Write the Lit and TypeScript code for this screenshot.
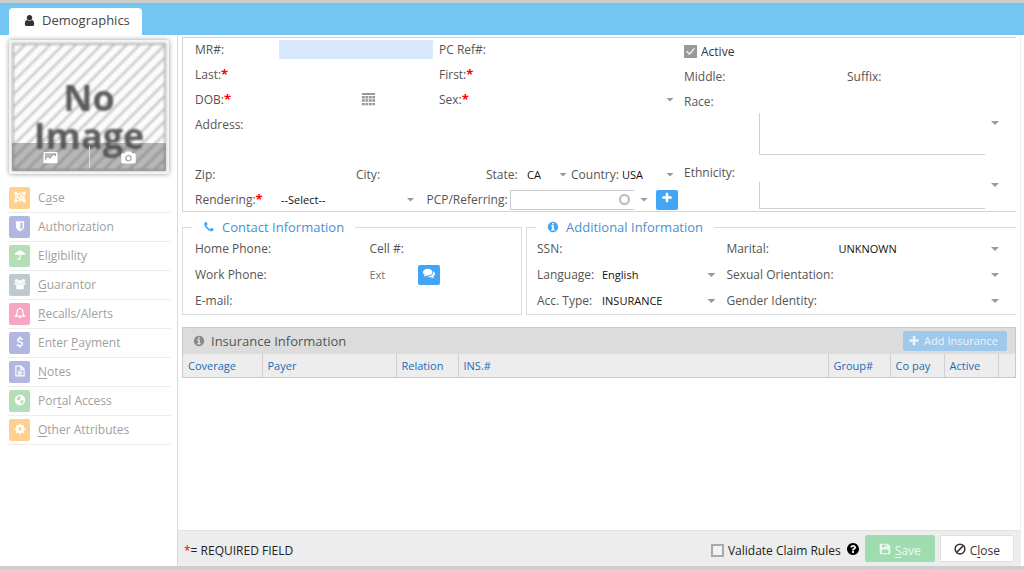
import { LitElement, html, css, svg, nothing } from "lit";
import { customElement, property } from "lit/decorators.js";

const CIRCLE = "m640 416q0 209-103 385.5t-279.5 279.5-385.5 103-385.5-103-279.5-279.5-103-385.5 103-385.5 279.5-279.5 385.5-103 385.5 103 279.5 279.5 103 385.5z";

const FILLED: Record<string, string> = {
  user: "M1536 1399q0 109-62.5 187t-150.5 78h-854q-88 0-150.5-78t-62.5-187q0-85 8.5-160.5t31.5-152 58.5-131 94-89 134.5-34.5q131 128 313 128t313-128q76 0 134.5 34.5t94 89 58.5 131 31.5 152 8.5 160.5zm-256-887q0 159-112.5 271.5t-271.5 112.5-271.5-112.5-112.5-271.5 112.5-271.5 271.5-112.5 271.5 112.5 112.5 271.5z",
  plus: "M1600 736v192q0 40-28 68t-68 28h-416v416q0 40-28 68t-68 28h-192q-40 0-68-28t-28-68v-416h-416q-40 0-68-28t-28-68v-192q0-40 28-68t68-28h416v-416q0-40 28-68t68-28h192q40 0 68 28t28 68v416h416q40 0 68 28t28 68z",
  phone: "M1600 1240q0 27-10 70.5t-21 68.5q-21 50-122 106-94 51-186 51-27 0-52.5-3.5t-57.5-12.5-47.5-14.5-55.5-20.5-49-18q-98-35-175-83-128-79-264.5-215.5t-215.5-264.5q-48-77-83-175-3-9-18-49t-20.5-55.5-14.5-47.5-12.5-57.5-3.5-52.5q0-92 51-186 56-101 106-122 25-11 68.5-21t70.5-10q14 0 21 3 18 6 53 76 11 19 30 54t35 63.5 31 53.5q3 4 17.5 25t21.5 35.5 7 28.5q0 20-28.5 50t-62 55-62 53-28.5 46q0 9 5 22.5t8.5 20.5 14 24 11.5 19q76 137 174 235t235 174q2 1 19 11.5t24 14 20.5 8.5 22.5 5q18 0 46-28.5t53-62 55-62 50-28.5q14 0 28.5 7t35.5 21.5 25 17.5q25 15 53.5 31t63.5 35 54 30q70 35 76 53 3 7 3 21z",
  info: "M1152 1376v-160q0-14-9-23t-23-9h-96v-512q0-14-9-23t-23-9h-320q-14 0-23 9t-9 23v160q0 14 9 23t23 9h96v320h-96q-14 0-23 9t-9 23v160q0 14 9 23t23 9h448q14 0 23-9t9-23zm-128-896v-160q0-14-9-23t-23-9h-192q-14 0-23 9t-9 23v160q0 14 9 23t23 9h192q14 0 23-9t9-23z" + CIRCLE,
  question: "M1024 1376v-192q0-14-9-23t-23-9h-192q-14 0-23 9t-9 23v192q0 14 9 23t23 9h192q14 0 23-9t9-23zm256-672q0-88-55.5-163t-138.5-116-170-41q-243 0-371 213-15 24 8 42l132 100q7 6 19 6 16 0 25-12 53-68 86-92 34-24 86-24 48 0 85.5 26t37.5 59q0 38-20 61t-68 45q-63 28-115.5 86.5t-52.5 125.5v36q0 14 9 23t23 9h192q14 0 23-9t9-23q0-19 21.5-49.5t54.5-49.5q32-18 49-28.5t46-35 44.5-48 28-60.5 12.5-81zm384 192q0 209-103 385.5t-279.5 279.5-385.5 103-385.5-103-279.5-279.5-103-385.5 103-385.5 279.5-279.5 385.5-103 385.5 103 279.5 279.5 103 385.5z",
  comments: "M1408 768q0 139-94 257t-256.5 186.5-353.5 68.5q-86 0-176-16-124 88-278 128-36 9-86 16h-3q-11 0-20.5-8t-11.5-21q-1-3-1-6.5t.5-6.5 2-6l2.5-5 3.5-5.5 4-5 4.5-5 4-4.5q5-6 23-25t26-29.5 22.5-29 25-38.5 20.5-44q-124-72-195-177t-71-224q0-139 94-257t256.5-186.5 353.5-68.5 353.5 68.5 256.5 186.5 94 257zm384 256q0 120-71 224.5t-195 176.5q10 24 20.5 44t25 38.5 22.5 29 26 29.5 23 25q1 1 4 4.5t4.5 5 4 5 3.5 5.5l2.5 5 2 6 .5 6.5-1 6.5q-3 14-13 22t-22 7q-50-7-86-16-154-40-278-128-90 16-176 16-271 0-472-132 58 4 88 4 161 0 309-45t264-129q125-92 192-212t67-254q0-77-23-152 129 71 204 178t75 230z",
};

const DRAWN: Record<string, unknown> = {
  group: svg`<g fill="none" stroke="currentColor" stroke-width="1.5"><path d="M2.500 3h11v10h-11z"/><path d="M4.600 5h4.600v4H4.600zM9.600 7h2v4.200H7V9.400"/></g><path fill="currentColor" d="M0.500 1h3.500v3.500H.5zM12 1h3.500v3.500H12zM0.500 11.500h3.500V15H.5zM12 11.500h3.500V15H12z"/>`,
  shield: svg`<path fill="currentColor" fill-rule="evenodd" d="M2.500 1.500h11v7c0 3-2.700 5-5.500 6.500C5.200 13.500 2.500 11.500 2.500 8.500zM8.500 3.500v9c2-1.200 3-2.300 3-4v-5z"/>`,
  umbrella: svg`<path fill="currentColor" d="M8.600 2.200V1H7.400v1.200C4 2.500 1.300 4.800.7 8.200c1-1 2.600-1 3.700.2C5.300 7.200 7 7 8 8.300 9 7 10.700 7.200 11.600 8.400c1.100-1.200 2.700-1.200 3.700-.2-.6-3.400-3.300-5.700-6.700-6z"/><path fill="none" stroke="currentColor" stroke-width="1.500" stroke-linecap="round" d="M8 7v5.800c0 2-3 2-3 0"/>`,
  users: svg`<g fill="currentColor"><circle cx="3.400" cy="3.400" r="2.200"/><circle cx="12.600" cy="3.400" r="2.200"/><circle cx="8" cy="5.400" r="2.900"/><path d="M.3 8.600c0-2 .8-3 1.800-3 1 .6 2 .6 2.600.5 0 1 .2 1.800.8 2.500H.300zM15.700 8.600c0-2-.8-3-1.800-3-1 .6-2 .6-2.600.5 0 1-.2 1.800-.8 2.500zM2.800 13c0-3 .8-5 2.600-5 1.800 1.200 3.400 1.200 5.200 0 1.800 0 2.600 2 2.600 5 0 1.300-.8 2-1.900 2H4.700c-1.100 0-1.900-.7-1.900-2z"/></g>`,
  bell: svg`<path fill="none" stroke="currentColor" stroke-width="1.500" d="M8 2.400c-2.500 0-3.800 1.700-3.800 4 0 3.300-.8 4.700-2.200 5.800h12c-1.400-1.100-2.200-2.500-2.200-5.800 0-2.300-1.300-4-3.800-4z"/><path fill="currentColor" d="M7.200.8h1.600v2H7.200zM6 12.600h4c0 1.300-.8 2.200-2 2.200s-2-.9-2-2.200z"/>`,
  dollar: svg`<path fill="none" stroke="currentColor" stroke-width="2" d="M11.600 4.800C10.500 3.800 9.300 3.300 8 3.300c-3.800 0-4 3.500-.8 4.400l1.600.5c3.600 1 3.200 4.700-.8 4.700-1.600 0-3-.6-4-1.700M8 .8v3M8 12.500v3"/>`,
  note: svg`<path fill="none" stroke="currentColor" stroke-width="1.500" d="M2.500 1.500h7l4 4v9h-11zM9.200 1.500v4.300h4.300M5 8h6M5 10h6M5 12.200h6"/>`,
  globe: svg`<path fill="currentColor" fill-rule="evenodd" d="M8 1a7 7 0 1 0 0 14A7 7 0 0 0 8 1zM5 3.500l3-1 1.500 2-2 1.500 1 1.500-3 1-2-1.500zM9.500 8l3.500.5-.5 2.500-2.500 2.500-1.500-3z"/>`,
  gear: svg`<path fill="currentColor" fill-rule="evenodd" d="M6.900 1h2.200l.4 2 1 .4 1.700-1.100 1.500 1.500-1.100 1.700.4 1 2 .4v2.200l-2 .4-.4 1 1.100 1.700-1.500 1.500-1.700-1.100-1 .4-.4 2H6.900l-.4-2-1-.4-1.700 1.100-1.500-1.500 1.100-1.700-.4-1-2-.4V6.900l2-.4.4-1-1.100-1.700 1.500-1.500 1.700 1.100 1-.4zM8 5.800a2.200 2.200 0 1 0 0 4.400 2.200 2.200 0 0 0 0-4.400z"/>`,
  picture: svg`<path fill="currentColor" fill-rule="evenodd" d="M1.500 2h13c.6 0 1 .4 1 1v10c0 .6-.4 1-1 1h-13c-.6 0-1-.4-1-1V3c0-.6.400-1 1-1zM2 3.500v7.700l3.200-3.400 2.200 1.800 3.600-4.300 3 1.400V3.500z"/>`,
  camera: svg`<path fill="currentColor" fill-rule="evenodd" d="M5.200 1.500h5.600l1 2h2.400c.8 0 1.500.6 1.500 1.500v8c0 .8-.7 1.500-1.500 1.500H1.800C1 14.500.3 13.800.3 13V5c0-.9.7-1.500 1.500-1.500h2.400zM8 5.300a3.500 3.500 0 1 0 0 7 3.500 3.500 0 0 0 0-7zM8 6.700a2.100 2.100 0 1 1 0 4.200 2.100 2.100 0 0 1 0-4.200z"/>`,
  calendar: svg`<path fill="currentColor" d="M1 1h14v2.200H1zM1 4.200h3v2.600H1zM4.700 4.200h3v2.600h-3zM8.400 4.200h3v2.600h-3zM12.100 4.200H15v2.600h-2.900zM1 7.800h3v2.600H1zM4.700 7.800h3v2.600h-3zM8.400 7.800h3v2.600h-3zM12.100 7.800H15v2.600h-2.900zM1 11.600h3v2.600H1zM4.700 11.600h3v2.600h-3zM8.400 11.600h3v2.600h-3zM12.100 11.600H15v2.600h-2.900z"/>`,
  floppy: svg`<path fill="currentColor" fill-rule="evenodd" d="M1 2c0-.6.4-1 1-1h9.600L15 4.400V14c0 .6-.4 1-1 1H2c-.6 0-1-.4-1-1zM4 2.300v3.500h6.500V2.300zM3.500 8.500v5.200h9V8.500zM7.700 2.800h1.800v2.500H7.700z"/>`,
  ban: svg`<g fill="none" stroke="currentColor" stroke-width="2"><circle cx="8" cy="8" r="6.500"/><path d="M3.500 12.500l9-9"/></g>`,
};

@customElement("ui-icon")
export class UiIcon extends LitElement {
  @property() name = "";
  static styles = css`
    :host { display: inline-flex; width: 12px; height: 12px; flex: none; }
    svg { width: 100%; height: 100%; display: block; }
  `;
  render() {
    const filled = FILLED[this.name];
    return filled
      ? html`<svg viewBox="0 0 1792 1792" aria-hidden="true"><path fill="currentColor" d=${filled}></path></svg>`
      : html`<svg viewBox="0 0 16 16" aria-hidden="true">${DRAWN[this.name]}</svg>`;
  }
}

const MENU = [
  { icon: "group", tone: "orange", label: html`C<u>a</u>se` },
  { icon: "shield", tone: "indigo", label: html`Authorization` },
  { icon: "umbrella", tone: "green", label: html`El<u>i</u>gibility` },
  { icon: "users", tone: "slate", label: html`<u>G</u>uarantor` },
  { icon: "bell", tone: "pink", label: html`<u>R</u>ecalls/Alerts` },
  { icon: "dollar", tone: "indigo", label: html`Enter <u>P</u>ayment` },
  { icon: "note", tone: "indigo", label: html`<u>N</u>otes` },
  { icon: "globe", tone: "green", label: html`Por<u>t</u>al Access` },
  { icon: "gear", tone: "orange", label: html`<u>O</u>ther Attributes` },
];

@customElement("app-root")
export class AppRoot extends LitElement {
  static styles = css`
    * { box-sizing: border-box; }
    :host {
      display: flex;
      flex-direction: column;
      min-height: 100vh;
      box-sizing: border-box;
      border-top: 3px solid #cdcdcd;
      border-bottom: 3px solid #cdcdcd;
      background: #fff;
      color: #555;
      font: 12px/16px "Open Sans", "Noto Sans", sans-serif;
    }
    input, select, textarea, button { font: inherit; margin: 0; border-radius: 0; }
    button { cursor: pointer; }
    u { text-underline-offset: 2px; }

    .tabs { display: flex; align-items: flex-end; height: 32px; padding-left: 9px; background: #73c6f1; }
    .tab {
      display: flex; align-items: center; gap: 6px; height: 27px; padding: 0 12px 3px 14px; border: 0;
      border-radius: 4px 4px 0 0; background: #fff; color: #444; font-size: 13px;
    }
    .tab ui-icon { width: 13px; height: 13px; color: #333; }

    .body { flex: 1; display: flex; }
    .side { width: 178px; flex: none; border-right: 1px solid #d9d9d9; padding: 5px 6px 0 7px; }
    .photo {
      display: grid; margin: 0 2px; height: 134px; padding: 3px; background: #f5f5f5;
      border-radius: 2px; box-shadow: 0 0 5px #999; overflow: hidden;
    }
    .placeholder, .photobar { grid-area: 1 / 1; }
    .placeholder {
      display: flex; align-items: flex-end; justify-content: center; padding-bottom: 14px;
      border: 2px solid #b8b8b8;
      background: repeating-linear-gradient(135deg, #fcfcfc 0 6px, #bdbdbd 7px 8px, #fcfcfc 9px);
      color: #5c5c5c; font-weight: 700; font-size: 36px; line-height: 38px; text-align: center; filter: blur(1px);
    }
    .photobar {
      z-index: 1; align-self: end; height: 28px; display: grid; grid-template-columns: 1fr 1fr;
      align-items: center; background: rgba(80, 80, 80, 0.4);
    }
    .photobar button { border: 0; padding: 0; background: none; color: #fff; display: flex; justify-content: center; align-items: center; height: 22px; }
    .photobar button + button { border-left: 1px solid #ddd; }
    .photobar ui-icon { width: 15px; height: 15px; }

    .menu { list-style: none; margin: 10px 0 0; padding: 0; }
    .menu li { border-bottom: 1px solid #eee; height: 29px; padding: 3px 2px; }
    .menu a { display: flex; gap: 8px; align-items: center; color: #a0a0a0; text-decoration: none; line-height: 22px; }
    .badge { width: 21px; height: 22px; border-radius: 2px; display: flex; justify-content: center; padding-top: 4px; color: #fff; }
    .orange { background: #ffd08e; }
    .indigo { background: #b0b7e1; }
    .green { background: #b3deb6; }
    .slate { background: #bfcad0; }
    .pink { background: #f7a5c1; }

    .main { flex: 1; min-width: 0; display: flex; flex-direction: column; margin-right: 3px; border-right: 1px solid #eee; }
    .content { flex: 1; padding: 2px 4px 0; }

    .card {
      display: grid; grid-template-columns: minmax(0, 501fr) minmax(0, 332fr);
      border: 1px solid #d4d4d4; border-right: 0;
    }
    .left { display: flex; flex-direction: column; gap: 2px; padding: 0 6px 0 12px; }
    .right { display: flex; flex-direction: column; gap: 2px; padding: 2px 11px 0 0; }
    .row { display: grid; align-items: center; height: 23px; }
    .pair { grid-template-columns: 84px minmax(0, 154fr) 78px minmax(0, 167fr); }
    .pair label:nth-of-type(2) { padding-left: 6px; }
    .addr { grid-template-columns: 84px minmax(0, 1fr); height: 48px; align-items: start; }
    .addr label { padding-top: 4px; }
    .zip { grid-template-columns: 84px minmax(0, 77fr) 48px minmax(0, 82fr) 39px 46px 49px minmax(0, 58fr); }
    .rend { grid-template-columns: 84px minmax(0, 140fr) 92px minmax(0, 124fr) 22px 22px; }
    .rend label:nth-of-type(2) { padding-left: 8px; }
    .req { color: #f00; font-size: 13px; font-weight: 700; line-height: 12px; }
    label { white-space: nowrap; }
    .box { width: 100%; min-width: 0; height: 19px; border: 0; padding: 0 3px; background: transparent; color: #000; outline: none; }
    .shade { background: #d9e8fd; }
    .dob { display: flex; align-items: center; padding-right: 57px; }
    .icon { border: 0; padding: 0; background: none; display: flex; color: #999; }
    .icon ui-icon { width: 15px; height: 15px; }
    .sel { display: grid; align-items: center; min-width: 0; }
    .sel select {
      grid-area: 1 / 1; appearance: none; width: 100%; height: 20px; border: 0; padding: 0 12px 0 2px;
      background: transparent; color: #111; outline: none; font-size: 11px;
    }
    .sel::after, .arrow::after { content: ""; width: 8px; height: 4px; background: #999; clip-path: polygon(0 0, 100% 0, 50% 100%); }
    .sel::after { grid-area: 1 / 1; justify-self: end; margin-right: 4px; pointer-events: none; }
    .arrow { border: 0; padding: 0; background: none; width: 20px; height: 20px; display: flex; align-items: center; justify-content: center; }
    .search { display: flex; align-items: center; height: 20px; border: 1px solid #ccc; border-right: 0; padding-right: 4px; }
    .ring { width: 11px; height: 11px; border: 2px solid #bbb; border-radius: 50%; flex: none; }
    .blue { width: 22px; height: 20px; border: 0; border-radius: 2px; background: #42a5f5; color: #fff; display: flex; justify-content: center; padding: 2px 0 0; }
    .search input { height: 16px; }

    .check { display: flex; align-items: center; gap: 4px; color: #333; }
    .check input { appearance: none; width: 13px; height: 13px; border: 2px solid #aaa; background: #f3f3f3; display: grid; }
    .check input:checked { background: #999; border: 0; }
    .check input:checked::before {
      content: ""; margin: 2px; background: #eee;
      clip-path: polygon(0 50%, 12% 40%, 38% 68%, 88% 10%, 100% 20%, 38% 92%);
    }
    .mid { grid-template-columns: 75px minmax(0, 88fr) 48px minmax(0, 110fr); }
    .mid2 { grid-template-columns: 75px minmax(0, 1fr); }
    .multi { display: grid; grid-template-columns: minmax(0, 1fr) 20px; margin-left: 75px; }
    .multi textarea { resize: none; border: 1px solid #d0d0d0; border-top: 0; border-right: 0; background: transparent; outline: none; }
    .race { height: 42px; margin-top: -2px; }
    .eth { height: 27px; margin-top: -4px; }
    .eth .arrow { height: 6px; }
    .gap { margin-top: 4px; }

    .sets { display: grid; grid-template-columns: minmax(0, 340fr) minmax(0, 490fr); gap: 4px; margin-top: 7px; }
    fieldset { margin: 0; border: 1px solid #dcdcdc; padding: 0 12px; min-width: 0; }
    .open { border-right: 0; padding: 0 13px 1px 10px; }
    legend { margin-left: -3px; padding: 0 11px; display: flex; align-items: center; gap: 7px; height: 16px; color: #4a90cf; font-size: 13px; }
    .open legend { margin-left: -1px; }
    legend ui-icon { color: #42a5f5; }
    .trow { display: grid; align-items: center; height: 26px; padding-top: 2px; }
    .ct { grid-template-columns: 90px minmax(0, 84fr) 49px minmax(0, 90fr); }
    .ext { font-size: 11px; color: #777; }
    .ad { grid-template-columns: 63px minmax(0, 119fr) 117px minmax(0, 166fr); }
    .ad label:nth-of-type(2) { padding-left: 7px; }

    .ins { margin-top: 12px; border: 1px solid #c9c9c9; }
    .inshead { display: flex; align-items: center; gap: 6px; height: 26px; padding: 0 8px 0 10px; background: #dcdcdc; }
    .inshead h2 { flex: 1; margin: 0; font-size: 13px; font-weight: 400; color: #555; }
    .inshead > ui-icon { color: #888; }
    .add { display: flex; align-items: center; gap: 4px; height: 20px; padding: 0 9px 0 5px; border: 0; border-radius: 2px; background: #9fc9ea; color: #eaf4fc; font-size: 11px; }
    table { width: 100%; border-collapse: collapse; table-layout: fixed; background: #ededed; }
    th { height: 23px; padding: 0 0 0 5px; text-align: left; font-weight: 400; font-size: 11px; color: #1a6cb5; border-right: 1px solid #d0d0d0; }
    th:last-child { border-right: 0; }
    .w79 { width: 79px; } .w134 { width: 134px; } .w62 { width: 62px; } .w54 { width: 54px; } .w18 { width: 17px; }

    .foot { display: flex; align-items: center; gap: 5px; height: 36px; padding: 0 6px; border-top: 1px solid #e2e2e2; background: #ededed; color: #222; }
    .note { flex: 1; margin: 0; padding-top: 4px; }
    .note span { color: #f00; }
    .foot .check { color: #222; padding-top: 4px; }
    .help { color: #000; width: 14px; height: 14px; }
    .btn { display: flex; align-items: center; justify-content: center; gap: 4px; height: 27px; border: 1px solid #e0e0e0; border-radius: 2px; background: #fff; color: #333; padding: 0 13px; }
    .btn span { padding-top: 4px; }
    .save { background: #9fdcb0; border-color: #9fdcb0; color: #eefaf1; }
  `;

  private lab(id: string, text: string, required = false) {
    return html`<label for=${id}>${text}${required ? html`<span class="req">*</span>` : nothing}</label>`;
  }
  private box(id: string, extra = "") {
    return html`<input class="box ${extra}" id=${id} type="text" />`;
  }
  private sel(id: string, value = "") {
    return html`<span class="sel"><select id=${id}><option>${value}</option></select></span>`;
  }

  render() {
    return html`
      <header class="tabs"><button class="tab"><ui-icon name="user"></ui-icon>Demographics</button></header>
      <div class="body">
        <nav class="side">
          <div class="photo">
            <div class="placeholder"><span>No<br />Image</span></div>
            <div class="photobar">
              <button aria-label="Choose picture"><ui-icon name="picture"></ui-icon></button>
              <button aria-label="Take photo"><ui-icon name="camera"></ui-icon></button>
            </div>
          </div>
          <ul class="menu">
            ${MENU.map((m) => html`<li><a href="#"><span class="badge ${m.tone}"><ui-icon name=${m.icon}></ui-icon></span><span>${m.label}</span></a></li>`)}
          </ul>
        </nav>
        <main class="main">
          <div class="content">
            <section class="card">
              <div class="left">
                <div class="row pair">${this.lab("mr", "MR#:")}${this.box("mr", "shade")}${this.lab("pc", "PC Ref#:")}${this.box("pc")}</div>
                <div class="row pair">${this.lab("last", "Last:", true)}${this.box("last")}${this.lab("first", "First:", true)}${this.box("first")}</div>
                <div class="row pair">
                  ${this.lab("dob", "DOB:", true)}
                  <span class="dob">${this.box("dob")}<button class="icon" aria-label="Calendar"><ui-icon name="calendar"></ui-icon></button></span>
                  ${this.lab("sex", "Sex:", true)}${this.sel("sex")}
                </div>
                <div class="row addr">${this.lab("address", "Address:")}${this.box("address")}</div>
                <div class="row zip">
                  ${this.lab("zip", "Zip:")}${this.box("zip")}${this.lab("city", "City:")}${this.box("city")}
                  ${this.lab("state", "State:")}${this.sel("state", "CA")}${this.lab("country", "Country:")}${this.sel("country", "USA")}
                </div>
                <div class="row rend">
                  ${this.lab("rendering", "Rendering:", true)}${this.sel("rendering", "--Select--")}
                  ${this.lab("pcp", "PCP/Referring:")}<span class="search">${this.box("pcp")}<span class="ring"></span></span>
                  <button class="arrow" aria-label="Open list"></button>
                  <button class="blue" aria-label="Add provider"><ui-icon name="plus"></ui-icon></button>
                </div>
              </div>
              <div class="right">
                <div class="row"><label class="check"><input type="checkbox" checked disabled />Active</label></div>
                <div class="row mid">${this.lab("middle", "Middle:")}${this.box("middle")}${this.lab("suffix", "Suffix:")}${this.box("suffix")}</div>
                <div class="row mid2">${this.lab("race", "Race:")}</div>
                <div class="multi race"><textarea id="race"></textarea><button class="arrow" aria-label="Open race list"></button></div>
                <div class="row mid2 gap">${this.lab("ethnicity", "Ethnicity:")}</div>
                <div class="multi eth"><textarea id="ethnicity"></textarea><button class="arrow" aria-label="Open ethnicity list"></button></div>
              </div>
            </section>

            <div class="sets">
              <fieldset>
                <legend><ui-icon name="phone"></ui-icon>Contact Information</legend>
                <div class="trow ct">${this.lab("home", "Home Phone:")}${this.box("home")}${this.lab("cell", "Cell #:")}${this.box("cell")}</div>
                <div class="trow ct">
                  ${this.lab("work", "Work Phone:")}${this.box("work")}
                  <span class="ext">Ext</span>
                  <button class="blue" aria-label="Messages"><ui-icon name="comments"></ui-icon></button>
                </div>
                <div class="trow ct">${this.lab("email", "E-mail:")}${this.box("email")}</div>
              </fieldset>
              <fieldset class="open">
                <legend><ui-icon name="info"></ui-icon>Additional Information</legend>
                <div class="trow ad">${this.lab("ssn", "SSN:")}${this.box("ssn")}${this.lab("marital", "Marital:")}${this.sel("marital", "UNKNOWN")}</div>
                <div class="trow ad">${this.lab("language", "Language:")}${this.sel("language", "English")}${this.lab("orientation", "Sexual Orientation:")}${this.sel("orientation")}</div>
                <div class="trow ad">${this.lab("acc", "Acc. Type:")}${this.sel("acc", "INSURANCE")}${this.lab("gender", "Gender Identity:")}${this.sel("gender")}</div>
              </fieldset>
            </div>

            <section class="ins">
              <div class="inshead">
                <ui-icon name="info"></ui-icon><h2>Insurance Information</h2>
                <button class="add"><ui-icon name="plus"></ui-icon>Add Insurance</button>
              </div>
              <table>
                <thead>
                  <tr>
                    <th class="w79">Coverage</th><th class="w134">Payer</th><th class="w62">Relation</th><th>INS.#</th>
                    <th class="w62">Group#</th><th class="w54">Co pay</th><th class="w54">Active</th><th class="w18"></th>
                  </tr>
                </thead>
              </table>
            </section>
          </div>
          <footer class="foot">
            <p class="note"><span>*</span>= REQUIRED FIELD</p>
            <label class="check"><input type="checkbox" />Validate Claim Rules</label>
            <ui-icon class="help" name="question"></ui-icon>
            <button class="btn save"><ui-icon name="floppy"></ui-icon><span><u>S</u>ave</span></button>
            <button class="btn"><ui-icon name="ban"></ui-icon><span>C<u>l</u>ose</span></button>
          </footer>
        </main>
      </div>
    `;
  }
}
